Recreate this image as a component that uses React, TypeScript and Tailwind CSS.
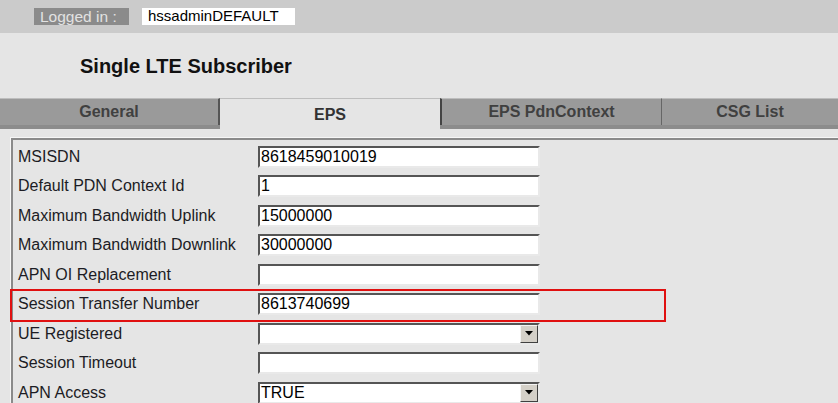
import React from 'react';

type Field = {
  label: string;
  value: string;
  select?: boolean;
  marked?: boolean;
};

const FIELDS: Field[] = [
  { label: 'MSISDN', value: '8618459010019' },
  { label: 'Default PDN Context Id', value: '1' },
  { label: 'Maximum Bandwidth Uplink', value: '15000000' },
  { label: 'Maximum Bandwidth Downlink', value: '30000000' },
  { label: 'APN OI Replacement', value: '' },
  { label: 'Session Transfer Number', value: '8613740699', marked: true },
  { label: 'UE Registered', value: '', select: true },
  { label: 'Session Timeout', value: '' },
  { label: 'APN Access', value: 'TRUE', select: true },
];

function DropButton() {
  return (
    <div className="absolute right-0 top-0 flex h-[18px] w-[18px] items-center justify-center border border-t-[#f4f4f4] border-l-[#f4f4f4] border-b-[#404040] border-r-[#404040] bg-[#d4d0c8]">
      <svg width="8" height="5" viewBox="0 0 8 5">
        <path d="M0 0h8L4 4.5z" fill="#000" />
      </svg>
    </div>
  );
}

function FieldRow({ field }: { field: Field }) {
  return (
    <div className="relative flex h-[29.5px] items-center">
      <div className="w-[245px] pl-[5px] text-[16px] text-[#1c1c24]">{field.label}</div>
      <div className="relative h-[22px] w-[282px] border-2 border-t-[#555] border-l-[#555] border-b-[#e9e9e9] border-r-[#e9e9e9] bg-white">
        <span className="absolute left-[1px] top-0 text-[16px] leading-[18px] text-black">{field.value}</span>
        {field.select && <DropButton />}
      </div>
      {/* red annotation frame */}
      {field.marked && (
        <div className="pointer-events-none absolute left-[-3px] top-[-1px] h-[33px] w-[656px] border-2 border-[#e01010]" />
      )}
    </div>
  );
}

export default function App() {
  return (
    <div
      className="h-[403px] w-[838px] overflow-hidden bg-[#e5e5e5]"
      style={{ fontFamily: '"Liberation Sans", Arial, sans-serif' }}
    >
      {/* top bar */}
      <div className="flex h-[33px] items-center gap-[13px] bg-[#cbcbcb] pl-[34px]">
        <span className="flex h-[17px] w-[95px] items-center bg-[#8b8b8b] pl-[6px] text-[15.5px] text-[#e2e2e2]">
          Logged in :
        </span>
        <span className="flex h-[17px] w-[153px] items-center bg-white pl-[6px] text-[15px] text-black">
          hssadminDEFAULT
        </span>
      </div>

      {/* title */}
      <div className="flex h-[65px] items-center pl-[80px] text-[20px] font-bold text-[#111]">
        Single LTE Subscriber
      </div>

      {/* tabs */}
      <div className="flex h-[31px] text-[16px] font-bold">
        <div className="flex w-[220px] flex-col">
          <div className="flex h-[27px] items-center justify-center border-t border-r-2 border-t-[#bdbdbd] border-r-[#555] bg-[#9a9a9a] text-[#404040]">
            General
          </div>
          <div className="h-[4px] bg-[#8c8c8c]" />
        </div>
        <div className="flex h-[31px] w-[220px] items-start justify-center border-t border-t-[#bdbdbd] pt-[4px] text-[#333]">
          EPS
        </div>
        <div className="flex w-[222px] flex-col">
          <div className="flex h-[27px] items-center justify-center border-t border-l-2 border-r border-t-[#bdbdbd] border-l-[#444] border-r-[#666] bg-[#9a9a9a] text-[#404040]">
            EPS PdnContext
          </div>
          <div className="h-[4px] bg-[#8c8c8c]" />
        </div>
        <div className="flex flex-1 flex-col">
          <div className="flex h-[27px] items-center justify-center border-t border-t-[#bdbdbd] bg-[#9a9a9a] text-[#404040]">
            CSG List
          </div>
          <div className="h-[4px] bg-[#8c8c8c]" />
        </div>
      </div>

      {/* form */}
      <div className="ml-[10px] mt-[8px] border-t border-l border-t-[#f6f6f6] border-l-[#f6f6f6]">
        <div className="border-t-2 border-l-2 border-t-[#8a8a8a] border-l-[#8a8a8a] pt-[2px]">
          {FIELDS.map(f => (
            <FieldRow key={f.label} field={f} />
          ))}
        </div>
      </div>
    </div>
  );
}
